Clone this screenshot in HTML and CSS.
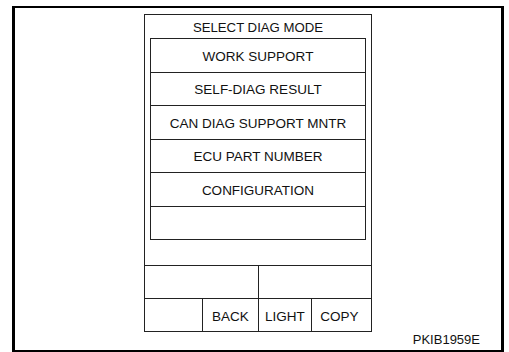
FILE: index.html
```html
<!DOCTYPE html>
<html>
<head>
<meta charset="utf-8">
<link rel="stylesheet" href="styles.css">
</head>
<body>
<div class="frame">
  <div class="device">
    <div class="title">SELECT DIAG MODE</div>
    <div class="list">
      <div class="row">WORK SUPPORT</div>
      <div class="row">SELF-DIAG RESULT</div>
      <div class="row">CAN DIAG SUPPORT MNTR</div>
      <div class="row">ECU PART NUMBER</div>
      <div class="row">CONFIGURATION</div>
      <div class="row"></div>
    </div>
    <div class="panel">
      <div class="top-row">
        <div class="cell"></div>
        <div class="cell"></div>
      </div>
      <div class="btn-row">
        <div class="cell"></div>
        <div class="cell">BACK</div>
        <div class="cell">LIGHT</div>
        <div class="cell">COPY</div>
      </div>
    </div>
  </div>
  <div class="code">PKIB1959E</div>
</div>
</body>
</html>
```

FILE: styles.css
```css
html, body {
  margin: 0;
  padding: 0;
  background: #fff;
}
body {
  font-family: "Liberation Sans", Arial, sans-serif;
  font-size: 13.5px;
  color: #111;
}
.frame {
  box-sizing: border-box;
  width: 492px;
  height: 346px;
  margin: 6px 0 0 12px;
  border: 3px solid #000;
  border-top-width: 2px;
  border-bottom-width: 2px;
  padding-top: 6px;
}
.device {
  box-sizing: border-box;
  width: 228px;
  margin: 0 auto;
  border: 1px solid #222;
  display: flex;
  flex-direction: column;
}
.title {
  height: 23px;
  line-height: 23px;
  padding-top: 1px;
  box-sizing: border-box;
  text-align: center;
  font-size: 13.2px;
}
.list {
  margin: 0 5px;
  border: 1px solid #222;
}
.row {
  box-sizing: border-box;
  height: 33.5px;
  padding-top: 2px;
  border-bottom: 1px solid #222;
  display: flex;
  align-items: center;
  justify-content: center;
}
.row:last-child {
  border-bottom: none;
  height: 32.5px;
}
.panel {
  margin-top: 25px;
  border-top: 1px solid #222;
}
.top-row {
  display: grid;
  grid-template-columns: 114px 1fr;
  height: 33px;
  border-bottom: 1px solid #222;
  box-sizing: border-box;
}
.top-row .cell:first-child {
  border-right: 1px solid #222;
}
.btn-row {
  display: grid;
  grid-template-columns: 58px 56px 53px 1fr;
  height: 32px;
}
.btn-row .cell {
  border-right: 1px solid #222;
  display: flex;
  align-items: center;
  justify-content: center;
  padding-top: 2px;
  box-sizing: border-box;
}
.btn-row .cell:last-child {
  border-right: none;
  padding-right: 4px;
}
.code {
  text-align: right;
  padding-right: 21px;
  line-height: 13px;
  margin-top: 1px;
  font-size: 13px;
}
```
